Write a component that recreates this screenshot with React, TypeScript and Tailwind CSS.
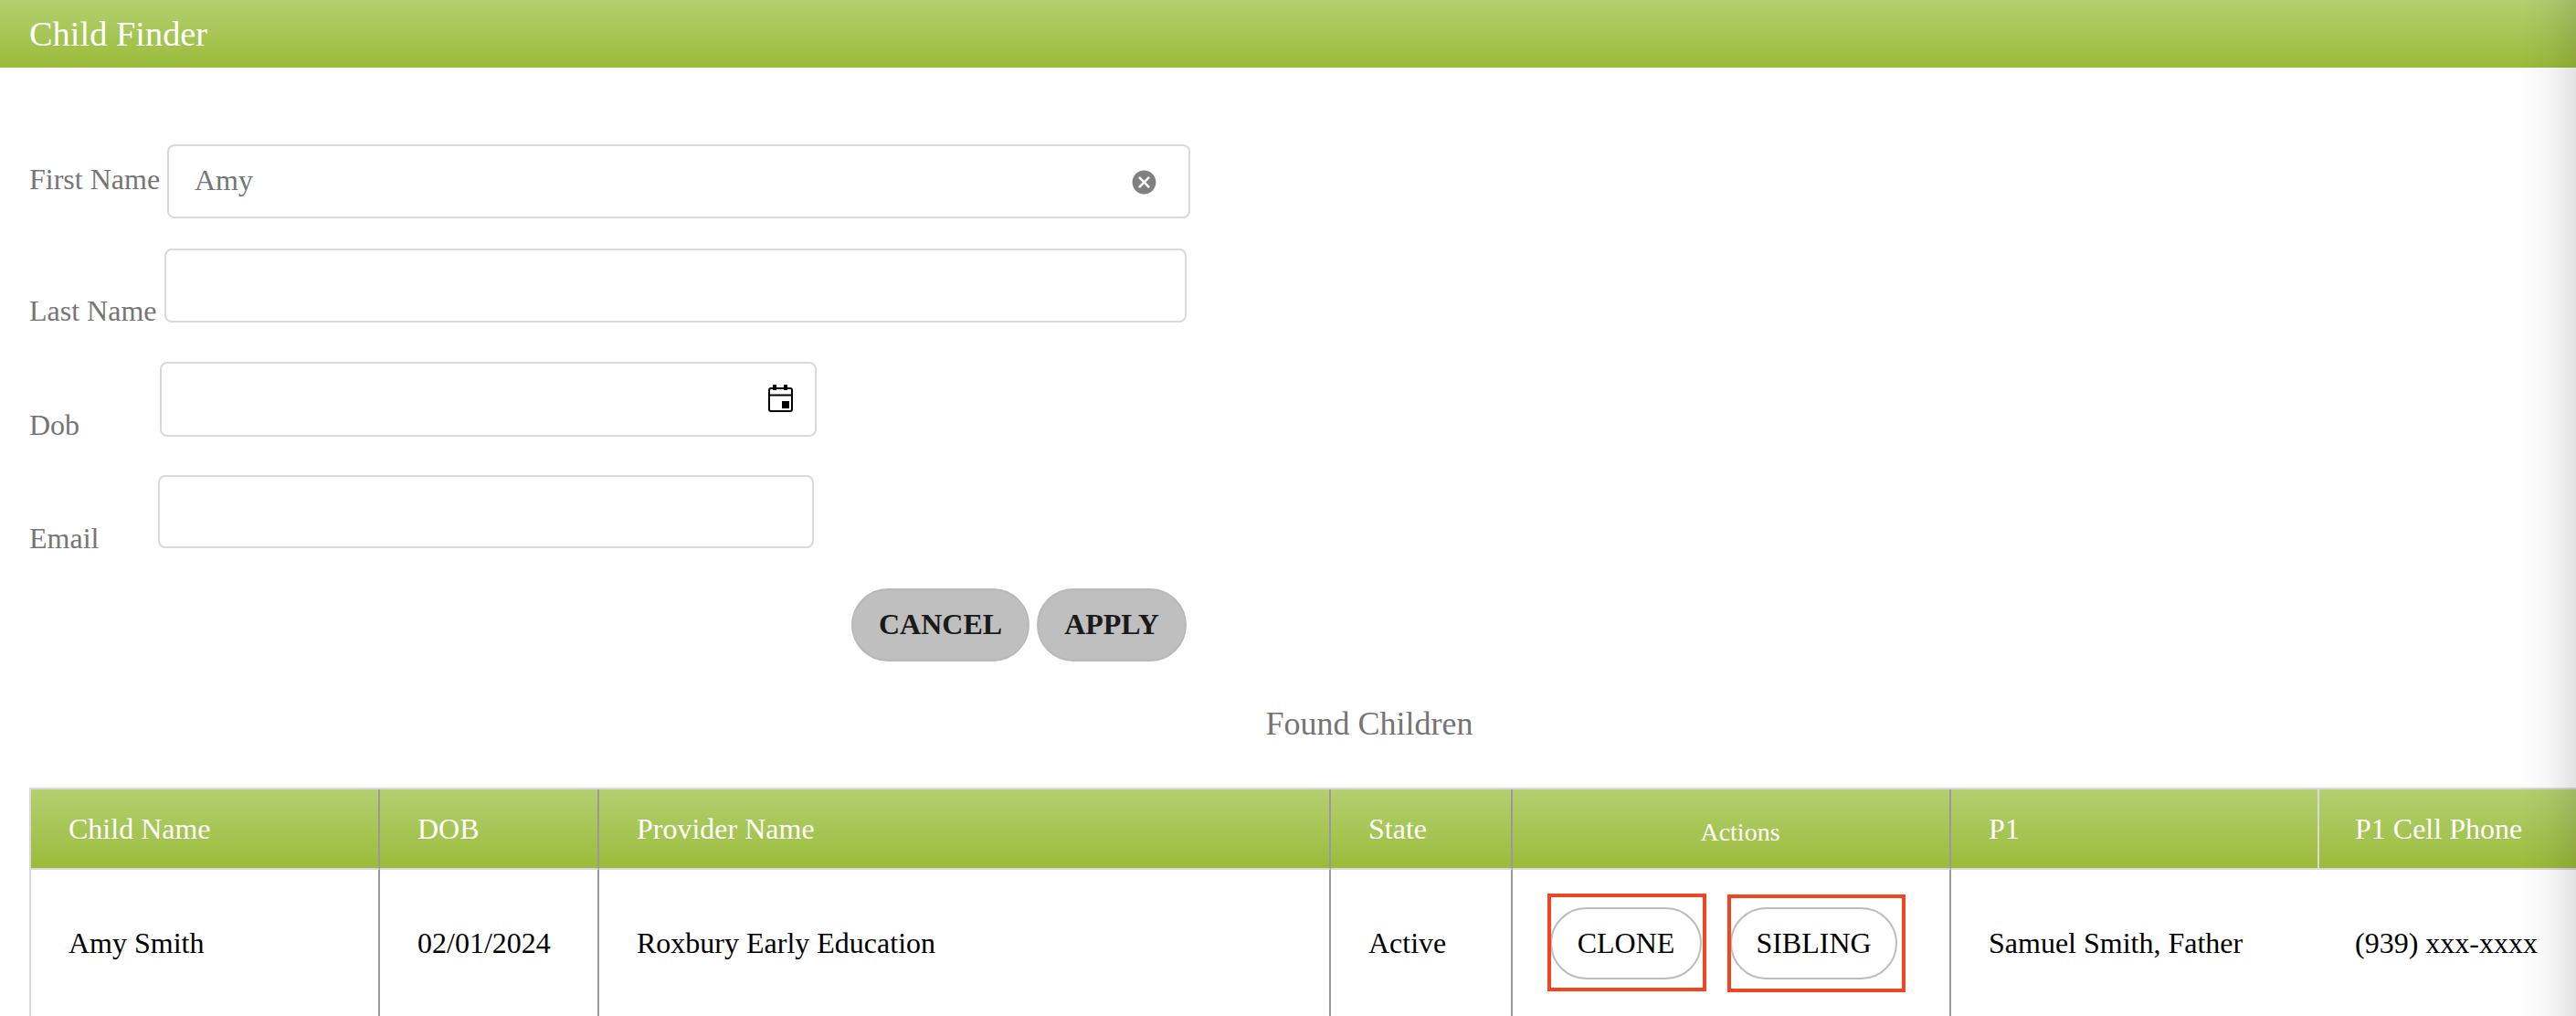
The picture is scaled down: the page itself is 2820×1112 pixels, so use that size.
import React from "react";

const heading = "bg-gradient-to-b from-[#b3d06f] to-[#9abb37]";

function CalendarIcon() {
  return (
    <svg viewBox="0 0 27 30" width="27" height="30" fill="none" className="shrink-0">
      <rect x="1" y="4" width="25" height="25" rx="2" stroke="#000" strokeWidth="2" />
      <path d="M1 11.5H26" stroke="#000" strokeWidth="2" />
      <path d="M5 0h4v6H5zM17 0h4v6h-4zM15 18h8v8h-8z" fill="#000" />
    </svg>
  );
}

function ClearIcon() {
  return (
    <svg viewBox="0 0 24 24" width="31" height="31" fill="#808080" className="shrink-0">
      <path d="M12 2C6.47 2 2 6.47 2 12s4.47 10 10 10 10-4.47 10-10S17.53 2 12 2zm5 13.59L15.59 17 12 13.41 8.41 17 7 15.59 10.59 12 7 8.41 8.41 7 12 10.59 15.59 7 17 8.41 13.41 12 17 15.59z" />
    </svg>
  );
}

function Field({ className, value, children }: { className: string; value?: string; children?: React.ReactNode }) {
  return (
    <div className={`flex items-center rounded-[8px] border-2 border-[#d9d9d9] bg-white pl-[28px] ${className}`}>
      <input
        readOnly
        value={value ?? ""}
        className="mb-[3px] min-w-0 flex-1 bg-transparent text-[32px] leading-[38px] text-[#757575] outline-none font-['Liberation_Serif',serif]"
      />
      {children}
    </div>
  );
}

const headCell = "h-[88px] border-r-2 border-[#999999] pl-[41px] text-left align-middle text-[32px] font-normal text-white";
const bodyCell = "h-[160px] border-r-2 border-[#999999] pl-[41px] align-middle text-[32px] text-black";

export default function App() {
  return (
    <div className="relative h-screen w-full overflow-hidden bg-white font-['Liberation_Serif',serif]">
      <header className={`flex h-[74px] items-center pl-[32px] text-[38.4px] leading-none text-white ${heading}`}>
        Child Finder
      </header>

      <div className="w-[2966px] pl-[32px]">
        <form className="flex flex-col pt-[84px] text-[32px] text-[#757575]">
          <div className="flex items-center gap-[9px]">
            <label className="mb-[6px] w-[142px] whitespace-nowrap leading-[38px]">First Name</label>
            <Field className="h-[81px] w-[1120px]" value="Amy">
              <span className="mr-[33px] mt-[2px] flex">
                <ClearIcon />
              </span>
            </Field>
          </div>
          <div className="mt-[33px] flex items-end gap-[9px]">
            <label className="mb-[-6px] w-[139px] whitespace-nowrap leading-[38px]">Last Name</label>
            <Field className="h-[81px] w-[1119px]" />
          </div>
          <div className="mt-[43px] flex items-end">
            <label className="mb-[-6px] w-[143px] whitespace-nowrap leading-[38px]">Dob</label>
            <Field className="h-[82px] w-[719px]">
              <span className="mr-[24px] flex pb-[2px]">
                <CalendarIcon />
              </span>
            </Field>
          </div>
          <div className="mt-[42px] flex items-end">
            <label className="mb-[-8px] w-[141px] whitespace-nowrap leading-[38px]">Email</label>
            <Field className="h-[80px] w-[718px]" />
          </div>
          <div className="mt-[44px] flex w-[1267px] justify-end gap-[8px]">
            <button type="button" className="h-[80px] w-[195px] rounded-[40px] border-2 border-[#b8b8b8] bg-[#bfbfbf] pb-[2px] text-[32px] font-bold text-[#1a1a1a]">
              CANCEL
            </button>
            <button type="button" className="h-[80px] w-[164px] rounded-[40px] border-2 border-[#b8b8b8] bg-[#bfbfbf] pb-[2px] text-[32px] font-bold text-[#1a1a1a]">
              APPLY
            </button>
          </div>
        </form>

        <h2 className="mt-[47px] text-center text-[36px] font-normal leading-[42px] text-[#757575]">Found Children</h2>

        <table className="mt-[49px] w-[2934px] table-fixed border-separate border-spacing-0 border-t-2 border-[#d9d9d9]">
          <colgroup>
            <col className="w-[384px]" />
            <col className="w-[240px]" />
            <col className="w-[801px]" />
            <col className="w-[199px]" />
            <col className="w-[480px]" />
            <col className="w-[403px]" />
            <col className="w-[427px]" />
          </colgroup>
          <thead>
            <tr className={heading}>
              <th className={`${headCell} border-b-2 border-l-2 border-b-[#d9d9d9] border-l-[#d9d9d9]`}>Child Name</th>
              <th className={`${headCell} border-b-2 border-b-[#d9d9d9]`}>DOB</th>
              <th className={`${headCell} border-b-2 border-b-[#d9d9d9]`}>Provider Name</th>
              <th className={`${headCell} border-b-2 border-b-[#d9d9d9]`}>State</th>
              <th className="h-[88px] border-r-2 border-b-2 border-[#999999] border-b-[#d9d9d9] pl-[20px] pt-[8px] text-center align-middle text-[28px] font-normal text-white">
                Actions
              </th>
              <th className="h-[88px] border-r-2 border-b-2 border-[#d9d9d9] pl-[41px] text-left align-middle text-[32px] font-normal text-white">P1</th>
              <th className="h-[88px] border-b-2 border-[#d9d9d9] pl-[39px] text-left align-middle text-[32px] font-normal text-white">P1 Cell Phone</th>
            </tr>
          </thead>
          <tbody>
            <tr>
              <td className={`${bodyCell} border-l-2 border-l-[#d9d9d9]`}>Amy Smith</td>
              <td className={bodyCell}>02/01/2024</td>
              <td className={bodyCell}>Roxbury Early Education</td>
              <td className={bodyCell}>Active</td>
              <td className="h-[160px] border-r-2 border-[#999999] pl-[41px] align-middle">
                <div className="flex items-center">
                  <span className="relative flex">
                    <button type="button" className="h-[79px] w-[166px] rounded-[40px] border-2 border-[#bdbdbd] bg-white text-[32px] text-black">
                      CLONE
                    </button>
                    <span className="pointer-events-none absolute left-[-3px] top-[-15px] h-[107px] w-[174px] border-[4px] border-[#f04423]" />
                  </span>
                  <span className="relative ml-[31px] flex">
                    <button type="button" className="h-[79px] w-[183px] rounded-[40px] border-2 border-[#bdbdbd] bg-white text-[32px] text-black">
                      SIBLING
                    </button>
                    <span className="pointer-events-none absolute left-[-3px] top-[-14px] h-[107px] w-[195px] border-[4px] border-[#f04423]" />
                  </span>
                </div>
              </td>
              <td className="h-[160px] pl-[41px] align-middle text-[32px] text-black">Samuel Smith, Father</td>
              <td className="h-[160px] pl-[39px] align-middle text-[32px] text-black">(939) xxx-xxxx</td>
            </tr>
          </tbody>
        </table>
      </div>

      <div className="pointer-events-none absolute right-0 top-0 h-full w-[62px] bg-[linear-gradient(to_right,rgba(0,0,0,0),rgba(0,0,0,0.035)_50%,rgba(0,0,0,0.11))]" />
    </div>
  );
}
